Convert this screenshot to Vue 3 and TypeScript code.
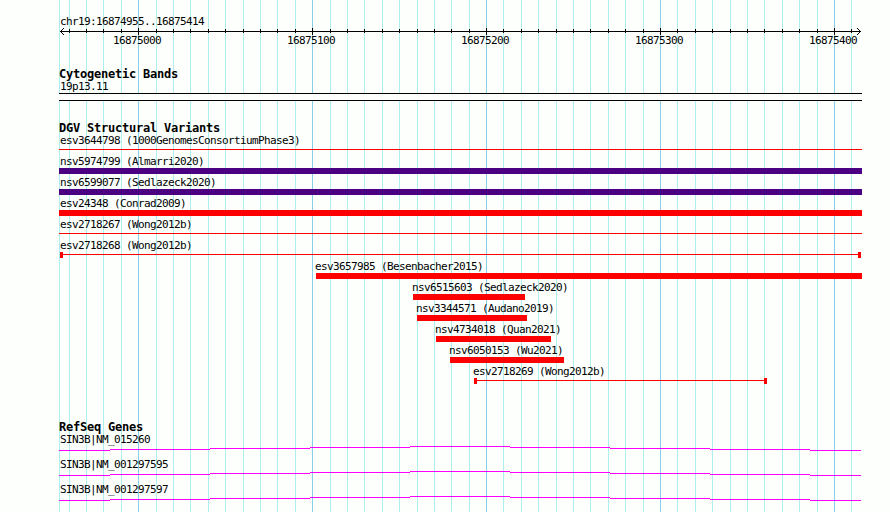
<script setup lang="ts">
interface Feature {
  label: string
  start: number
  end: number
  kind: 'bar' | 'line' | 'capped'
  color: string
}

const LEFT = 59
const RIGHT = 862
const RED = '#ff0000'
const INDIGO = '#4b0082'

const grid: number[] = [
  69, 86, 103, 121, 138, 156, 173, 190, 208, 225, 243, 260, 277, 295, 312, 330,
  347, 364, 382, 399, 417, 434, 451, 469, 486, 503, 521, 538, 556, 573, 590, 608,
  625, 643, 660, 677, 695, 712, 730, 747, 764, 782, 799, 817, 834, 851,
]
const isMajor = (x: number): boolean => grid.indexOf(x) % 10 === 4

const coordinates: string[] = ['16875000', '16875100', '16875200', '16875300', '16875400']

const features: Feature[] = [
  { label: 'esv3644798 (1000GenomesConsortiumPhase3)', start: LEFT, end: RIGHT, kind: 'line', color: RED },
  { label: 'nsv5974799 (Almarri2020)', start: LEFT, end: RIGHT, kind: 'bar', color: INDIGO },
  { label: 'nsv6599077 (Sedlazeck2020)', start: LEFT, end: RIGHT, kind: 'bar', color: INDIGO },
  { label: 'esv24348 (Conrad2009)', start: LEFT, end: RIGHT, kind: 'bar', color: RED },
  { label: 'esv2718267 (Wong2012b)', start: LEFT, end: RIGHT, kind: 'line', color: RED },
  { label: 'esv2718268 (Wong2012b)', start: 60, end: 861, kind: 'capped', color: RED },
  { label: 'esv3657985 (Besenbacher2015)', start: 316, end: RIGHT, kind: 'bar', color: RED },
  { label: 'nsv6515603 (Sedlazeck2020)', start: 413, end: 525, kind: 'bar', color: RED },
  { label: 'nsv3344571 (Audano2019)', start: 417, end: 527, kind: 'bar', color: RED },
  { label: 'nsv4734018 (Quan2021)', start: 436, end: 551, kind: 'bar', color: RED },
  { label: 'nsv6050153 (Wu2021)', start: 450, end: 564, kind: 'bar', color: RED },
  { label: 'esv2718269 (Wong2012b)', start: 474, end: 767, kind: 'capped', color: RED },
]

const labelInset = (f: Feature): number => Math.max(60, f.start - 1)

const genes: string[] = ['SIN3B|NM_015260', 'SIN3B|NM_001297595', 'SIN3B|NM_001297597']

// Shallow intron arc, stepping one pixel at a time: [x, y, width]
const intron: number[][] = [
  [59, 4, 51], [110, 3, 100], [210, 2, 100], [310, 1, 100], [410, 0, 100],
  [510, 1, 100], [610, 2, 100], [710, 3, 100], [810, 4, 51],
]
</script>

<template>
  <main class="browser">
    <svg class="grid" width="890" height="512" shape-rendering="crispEdges">
      <rect x="59" y="0" width="1" height="512" class="minor" />
      <rect v-for="x in grid" :key="x" :x="x" y="0" width="1" height="512" :class="isMajor(x) ? 'major' : 'minor'" />
    </svg>

    <section class="ruler">
      <div class="label region">chr19:16874955..16875414</div>
      <svg class="axis" width="890" height="9" shape-rendering="crispEdges">
        <rect x="60" y="4" width="801" height="1" />
        <rect v-for="x in grid" :key="x" :x="x" :y="isMajor(x) ? 1 : 2" width="1" :height="isMajor(x) ? 7 : 4" />
        <path d="M61 3h1v1h-1zM62 2h1v1h-1zM63 1h1v1h-1zM61 5h1v1h-1zM62 6h1v1h-1zM63 7h1v1h-1z" />
        <path d="M859 3h1v1h-1zM858 2h1v1h-1zM857 1h1v1h-1zM859 5h1v1h-1zM858 6h1v1h-1zM857 7h1v1h-1z" />
      </svg>
      <div class="coordinates">
        <span v-for="c in coordinates" :key="c" class="label">{{ c }}</span>
      </div>
    </section>

    <section class="cyto">
      <h2>Cytogenetic Bands</h2>
      <div class="label name">19p13.11</div>
      <div class="band"></div>
    </section>

    <section class="variants">
      <h2>DGV Structural Variants</h2>
      <div v-for="f in features" :key="f.label" class="feature">
        <div class="label" :style="{ marginLeft: labelInset(f) + 'px' }">{{ f.label }}</div>
        <div
          class="glyph"
          :class="f.kind"
          :style="{ marginLeft: f.start + 'px', width: f.end - f.start + 'px', color: f.color }"
        ></div>
      </div>
    </section>

    <section class="genes">
      <h2>RefSeq Genes</h2>
      <div v-for="g in genes" :key="g" class="gene">
        <div class="label name">{{ g }}</div>
        <svg width="890" height="5" shape-rendering="crispEdges">
          <rect v-for="s in intron" :key="s[0]" :x="s[0]" :y="s[1]" :width="s[2]" height="1" fill="#ff00ff" />
        </svg>
      </div>
    </section>
  </main>
</template>

<style>
body {
  background: #fcfffc;
}
</style>

<style scoped>
.browser {
  position: relative;
  width: 890px;
  height: 512px;
  overflow: hidden;
  color: #000;
  font-family: 'DejaVu Sans Mono', 'Liberation Mono', monospace;
}
svg {
  display: block;
}
.grid {
  position: absolute;
  inset: 0;
  z-index: -1;
}
.minor {
  fill: #afeeee;
}
.major {
  fill: #87ceeb;
}
.label {
  font-size: 11px;
  line-height: 13px;
  height: 13px;
  letter-spacing: -0.622px;
  white-space: pre;
}
h2 {
  margin: 0 0 0 59px;
  font-size: 12px;
  font-weight: bold;
  line-height: 13px;
  height: 13px;
  letter-spacing: -0.224px;
  white-space: pre;
}
.ruler {
  padding-top: 15px;
  height: 53px;
}
.region,
.name {
  margin-left: 60px;
}
.axis {
  margin-top: -1px;
}
.coordinates {
  display: flex;
  gap: 126px;
  margin: -2px 0 0 113px;
}
.coordinates .label {
  width: 48px;
}
.cyto {
  height: 54px;
}
.cyto .name {
  margin-top: -1px;
}
.band {
  box-sizing: border-box;
  height: 8px;
  width: 803px;
  margin-left: 59px;
  border: solid #000;
  border-width: 1px 0;
  background: #fcfffc;
}
.variants {
  height: 299px;
}
.variants h2,
.genes h2 {
  margin-bottom: -1px;
}
.feature {
  height: 21px;
}
.glyph {
  height: 6px;
  box-sizing: border-box;
}
.bar {
  background: currentColor;
}
.line {
  border-top: 1px solid currentColor;
  margin-top: 2px;
}
.capped {
  padding-top: 2px;
  border: solid currentColor;
  border-width: 0 3px;
}
.capped::before {
  content: '';
  display: block;
  height: 1px;
  background: currentColor;
}
.gene {
  height: 25px;
}
</style>
